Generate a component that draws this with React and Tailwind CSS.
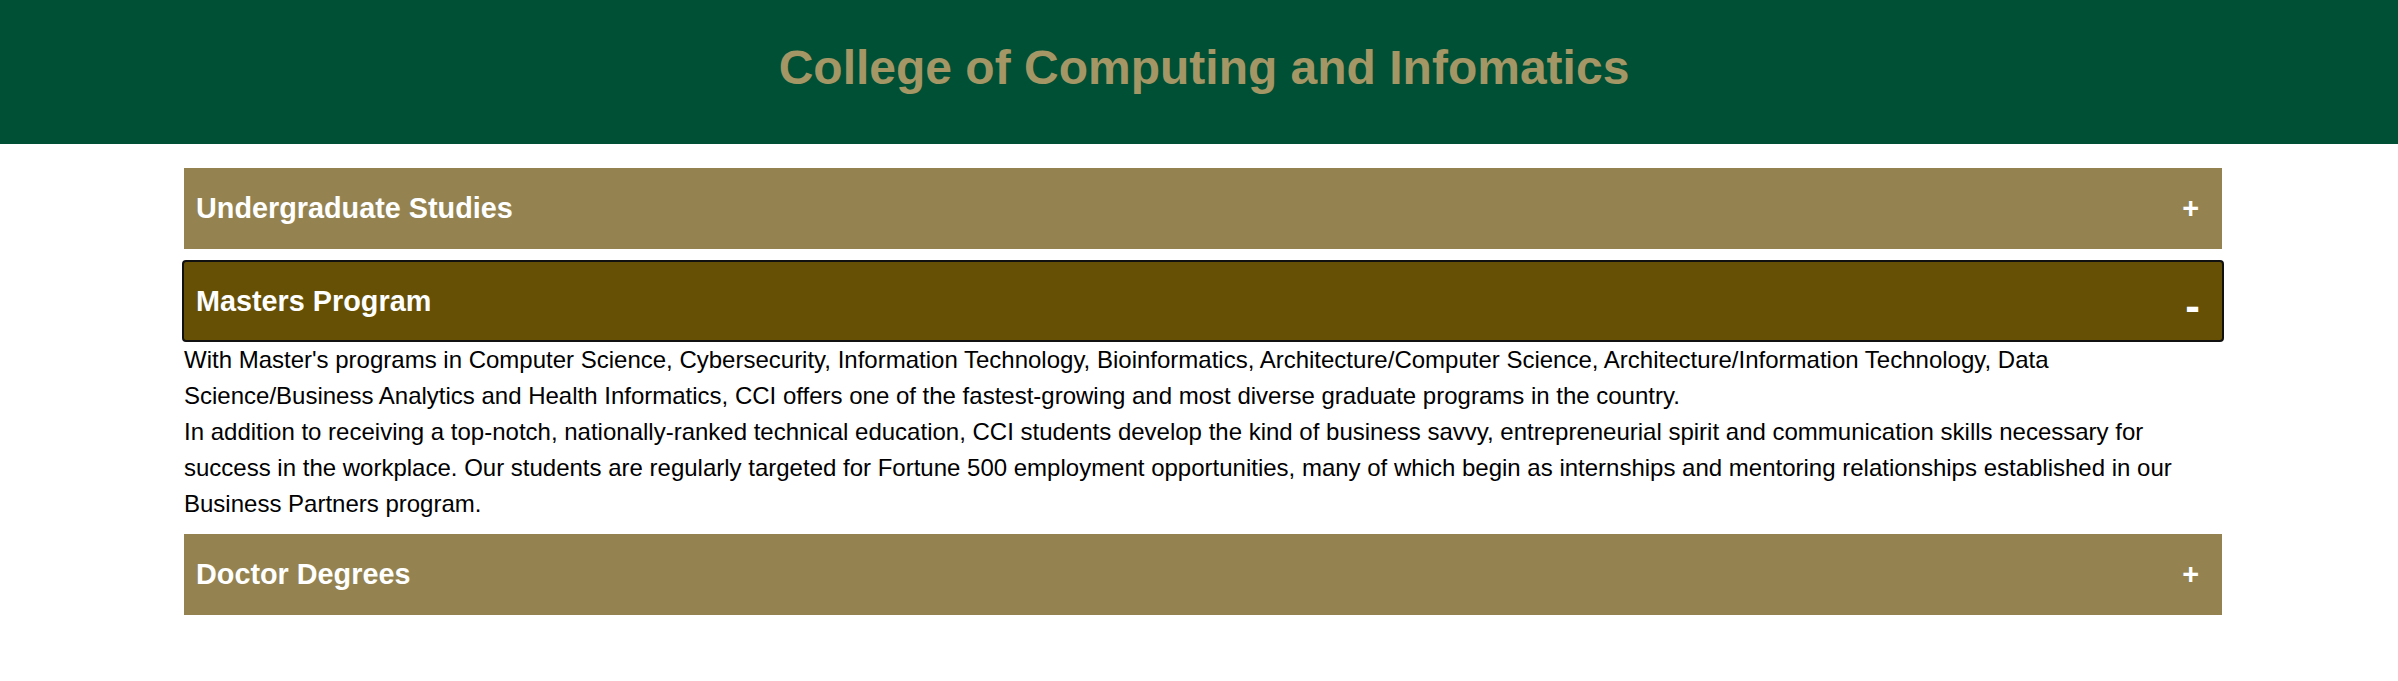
// App.jsx
// College page header with an accordion of degree programs

const sections = [
  { title: 'Undergraduate Studies', open: false },
  {
    title: 'Masters Program',
    open: true,
    body: [
      "With Master's programs in Computer Science, Cybersecurity, Information Technology, Bioinformatics, Architecture/Computer Science, Architecture/Information Technology, Data Science/Business Analytics and Health Informatics, CCI offers one of the fastest-growing and most diverse graduate programs in the country.",
      'In addition to receiving a top-notch, nationally-ranked technical education, CCI students develop the kind of business savvy, entrepreneurial spirit and communication skills necessary for success in the workplace. Our students are regularly targeted for Fortune 500 employment opportunities, many of which begin as internships and mentoring relationships established in our Business Partners program.',
    ],
  },
  { title: 'Doctor Degrees', open: false },
];

function AccordionItem({ section }) {
  if (section.open) {
    return (
      <div className="mt-[11px]">
        {/* Active header */}
        <button className="mx-[-2px] w-[calc(100%+4px)] h-[82px] flex items-center justify-between bg-[#665005] border-2 border-[#111] rounded-[4px] pl-[12px] pr-[22px] text-white cursor-pointer">
          <span className="text-[28.8px] font-bold leading-[33px]">{section.title}</span>
          <span className="text-[44px] font-bold leading-none mt-[10px]">-</span>
        </button>
        {/* Panel */}
        <div className="text-[24px] leading-[36px] text-black">
          {section.body.map((p, i) => (
            <p key={i}>{p}</p>
          ))}
        </div>
      </div>
    );
  }

  return (
    <button className="w-full h-[81px] flex items-center justify-between bg-[#948350] pl-[12px] pr-[23px] text-white cursor-pointer mt-[12px] first:mt-[24px]">
      <span className="text-[28.8px] font-bold leading-[33px]">{section.title}</span>
      <span className="text-[28.8px] font-bold leading-[33px]">+</span>
    </button>
  );
}

export default function App() {
  return (
    <div className="min-h-screen bg-white font-['Liberation_Sans',Arial,sans-serif]">
      {/* Header */}
      <header className="h-[144px] bg-[#005035] pt-[40px] pl-[10px] text-center">
        <h1 className="text-[48px] font-bold leading-[56px] text-[#a49665]">
          College of Computing and Infomatics
        </h1>
      </header>

      {/* Accordion */}
      <div className="ml-[184px] w-[2038px] flex flex-col">
        {sections.map((s) => (
          <AccordionItem key={s.title} section={s} />
        ))}
      </div>
    </div>
  );
}
